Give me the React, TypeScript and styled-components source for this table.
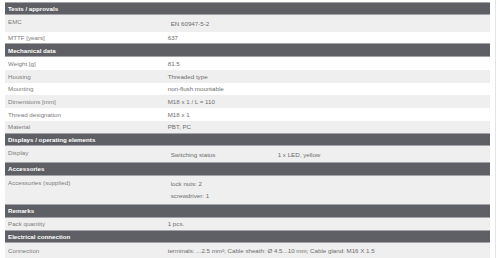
import React from 'react'
import styled, { createGlobalStyle } from 'styled-components'

const GlobalStyle = createGlobalStyle`
  html, body {
    margin: 0;
    padding: 0;
    background: #ffffff;
  }
  body {
    font-family: "Liberation Sans", Arial, sans-serif;
  }
`

type Item = {
  label: string
  h: number
  values?: string[]
  nested?: string[][]
}

type Section = {
  title: string
  h: number
  rows: Item[]
}

const sections: Section[] = [
  {
    title: 'Tests / approvals',
    h: 13.3,
    rows: [
      { label: 'EMC', h: 16.7, nested: [['EN 60947-5-2']] },
      { label: 'MTTF [years]', h: 11.3, values: ['637'] },
    ],
  },
  {
    title: 'Mechanical data',
    h: 14,
    rows: [
      { label: 'Weight [g]', h: 12.67, values: ['81.5'] },
      { label: 'Housing', h: 12.67, values: ['Threaded type'] },
      { label: 'Mounting', h: 12.67, values: ['non-flush mountable'] },
      { label: 'Dimensions [mm]', h: 12.67, values: ['M18 x 1 / L = 110'] },
      { label: 'Thread designation', h: 12.67, values: ['M18 x 1'] },
      { label: 'Material', h: 12.67, values: ['PBT, PC'] },
    ],
  },
  {
    title: 'Displays / operating elements',
    h: 13,
    rows: [
      { label: 'Display', h: 15.7, nested: [['Switching status', '1 x LED, yellow']] },
    ],
  },
  {
    title: 'Accessories',
    h: 14,
    rows: [
      { label: 'Accessories (supplied)', h: 28, nested: [['lock nuts: 2'], ['screwdriver: 1']] },
    ],
  },
  {
    title: 'Remarks',
    h: 14,
    rows: [{ label: 'Pack quantity', h: 12, values: ['1 pcs.'] }],
  },
  {
    title: 'Electrical connection',
    h: 13,
    rows: [
      {
        label: 'Connection',
        h: 15,
        values: ['terminals: ...2.5 mm²; Cable sheath: Ø 4.5...10 mm; Cable gland: M16 X 1.5'],
      },
    ],
  },
]

export default function App() {
  let index = 0
  return (
    <>
      <GlobalStyle />
      <Page>
        <Table>
          {sections.map((section) => {
            index += 1
            return (
              <React.Fragment key={section.title}>
                <Header $h={section.h}>{section.title}</Header>
                {section.rows.map((row) => {
                  index += 1
                  return (
                    <Row key={row.label} $h={row.h} $shade={index % 2 === 0}>
                      <Label $top={!!row.nested}>{row.label}</Label>
                      {row.nested ? (
                        <Nested>
                          {row.nested.map((line, i) => (
                            <NestedLine key={i}>
                              {line.map((cell) => (
                                <NestedCell key={cell}>{cell}</NestedCell>
                              ))}
                            </NestedLine>
                          ))}
                        </Nested>
                      ) : (
                        <Value>{row.values?.join(' ')}</Value>
                      )}
                    </Row>
                  )
                })}
              </React.Fragment>
            )
          })}
        </Table>
      </Page>
    </>
  )
}

const Page = styled.div`
  width: 496px;
  height: 258px;
  padding: 2px 0 0 5px;
  box-sizing: border-box;
  border-right: 1px solid #e4e4e4;
  overflow: hidden;
`

const Table = styled.div`
  display: flex;
  flex-flow: column;
  width: 485px;
`

const Header = styled.div<{ $h: number }>`
  display: flex;
  align-items: center;
  height: ${(p) => p.$h}px;
  box-sizing: border-box;
  padding-left: 3px;
  background-color: #5f6065;
  border-top: 1px solid #a3a4a8;
  border-bottom: 1px solid #a3a4a8;
  color: #ffffff;
  font-size: 6.2px;
  font-weight: bold;
  flex-shrink: 0;
`

const Row = styled.div<{ $h: number; $shade: boolean }>`
  display: grid;
  grid-template-columns: 161.7px 1fr;
  height: ${(p) => p.$h}px;
  background-color: ${(p) => (p.$shade ? '#efefef' : '#ffffff')};
  color: #6e6e6e;
  font-size: 6.2px;
  flex-shrink: 0;
`

const Label = styled.div<{ $top: boolean }>`
  display: flex;
  align-items: ${(p) => (p.$top ? 'flex-start' : 'center')};
  padding: ${(p) => (p.$top ? '3px' : '0')} 0 0 3px;
  color: #7c7c7c;
  white-space: nowrap;
`

const Value = styled.div`
  display: flex;
  align-items: center;
  padding-left: 1px;
  white-space: nowrap;
`

const Nested = styled.div`
  display: flex;
  flex-flow: column;
  justify-content: center;
  padding: 2px 0;
`

const NestedLine = styled.div`
  display: grid;
  grid-template-columns: 107px 1fr;
  align-items: center;
  height: 12px;
  flex: 1 1 auto;
`

const NestedCell = styled.div`
  padding-left: 4px;
  white-space: nowrap;
`
